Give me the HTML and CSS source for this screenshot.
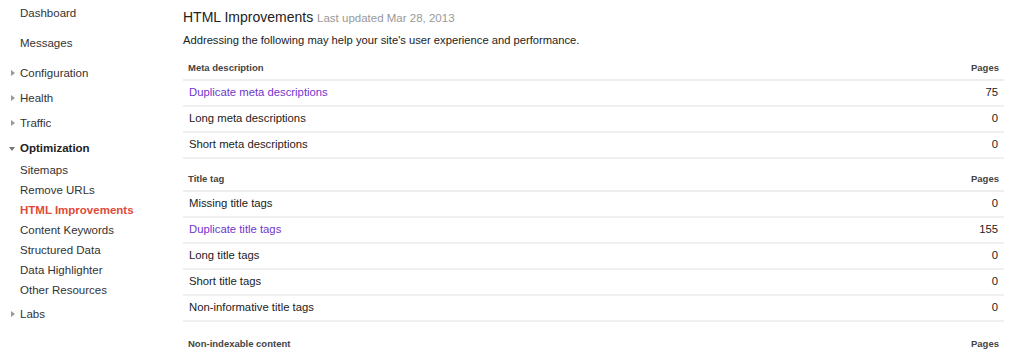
FILE: index.html
```html
<!DOCTYPE html>
<html lang="en">
<head>
<meta charset="UTF-8">
<title>HTML Improvements</title>
<link rel="stylesheet" href="styles.css">
</head>
<body>
  <div class="page">
    <nav class="sidebar">
      <div class="nav-top">Dashboard</div>
      <div class="nav-top nav-messages">Messages</div>
      <div class="nav-group"><span class="arrow"></span>Configuration</div>
      <div class="nav-group"><span class="arrow"></span>Health</div>
      <div class="nav-group"><span class="arrow"></span>Traffic</div>
      <div class="nav-group open"><span class="arrow down"></span>Optimization</div>
      <ul class="nav-sub">
        <li>Sitemaps</li>
        <li>Remove URLs</li>
        <li class="active">HTML Improvements</li>
        <li>Content Keywords</li>
        <li>Structured Data</li>
        <li>Data Highlighter</li>
        <li>Other Resources</li>
      </ul>
      <div class="nav-group nav-labs"><span class="arrow"></span>Labs</div>
    </nav>

    <main class="content">
      <h1 class="page-title">HTML Improvements <span class="updated">Last updated Mar 28, 2013</span></h1>
      <p class="intro">Addressing the following may help your site's user experience and performance.</p>

      <table class="issues">
        <tr class="section-head"><th>Meta description</th><th class="num">Pages</th></tr>
        <tr><td><a href="#">Duplicate meta descriptions</a></td><td class="num">75</td></tr>
        <tr><td>Long meta descriptions</td><td class="num">0</td></tr>
        <tr><td>Short meta descriptions</td><td class="num">0</td></tr>
      </table>

      <table class="issues">
        <tr class="section-head"><th>Title tag</th><th class="num">Pages</th></tr>
        <tr><td>Missing title tags</td><td class="num">0</td></tr>
        <tr><td><a href="#">Duplicate title tags</a></td><td class="num">155</td></tr>
        <tr><td>Long title tags</td><td class="num">0</td></tr>
        <tr><td>Short title tags</td><td class="num">0</td></tr>
        <tr><td>Non-informative title tags</td><td class="num">0</td></tr>
      </table>

      <table class="issues last">
        <tr class="section-head"><th>Non-indexable content</th><th class="num">Pages</th></tr>
      </table>
    </main>
  </div>
</body>
</html>
```

FILE: styles.css
```css
body {
  margin: 0;
  padding: 0;
  font-family: "Liberation Sans", Arial, sans-serif;
  font-size: 11.5px;
  color: #222222;
  background-color: #ffffff;
  overflow: hidden;
}

.page {
  display: flex;
}

/* left navigation */
.sidebar {
  width: 163px;
  padding-left: 20px;
  flex-shrink: 0;
  color: #333333;
}

.nav-top {
  height: 26px;
  line-height: 26px;
}

.nav-messages {
  margin-top: 4px;
  margin-bottom: 5px;
}

.nav-group {
  position: relative;
  height: 25px;
  line-height: 25px;
}

.nav-group.open {
  font-weight: bold;
  color: #222222;
}

.nav-labs {
  margin-top: 2px;
}

.arrow {
  position: absolute;
  left: -9px;
  top: 9px;
  width: 0;
  height: 0;
  border-left: 4px solid #999999;
  border-top: 3px solid transparent;
  border-bottom: 3px solid transparent;
}

.arrow.down {
  left: -11px;
  top: 11px;
  border-top: 4px solid #777777;
  border-left: 3px solid transparent;
  border-right: 3px solid transparent;
  border-bottom: none;
}

.nav-sub {
  list-style: none;
  margin: -1px 0 0 0;
  padding: 0;
}

.nav-sub li {
  height: 20px;
  line-height: 20px;
}

.nav-sub li.active {
  color: #dd4b39; /* red */
  font-weight: bold;
}

/* main area */
.content {
  flex: 1;
  padding: 7px 20px 0 0;
}

.page-title {
  margin: 0;
  font-size: 14px;
  font-weight: normal;
  line-height: 20px;
  color: #222222;
}

.updated {
  font-size: 11.5px;
  color: #999999;
}

.intro {
  margin: 2px 0 0 0;
  font-size: 11.2px;
  line-height: 20px;
}

.issues {
  width: 100%;
  border-collapse: collapse;
  margin-top: 9px;
}

.issues:first-of-type {
  margin-top: 7px;
}

.issues.last {
  margin-top: 11px;
}

.section-head th {
  text-align: left;
  font-size: 9.5px;
  font-weight: bold;
  color: #444444;
  line-height: 12px;
  padding: 5px 6px 5px 5px;
  border-bottom: 2px solid #eeeeee;
}

.issues td {
  height: 23px;
  line-height: 23px;
  padding: 0 6px 1px;
  font-size: 11.3px;
  border-bottom: 2px solid #f0f0f0;
}

.issues .num {
  text-align: right;
  width: 80px;
}

.section-head th.num {
  padding-right: 5px;
}

.issues a {
  color: #7036cc; /* visited purple */
  text-decoration: none;
}
```
